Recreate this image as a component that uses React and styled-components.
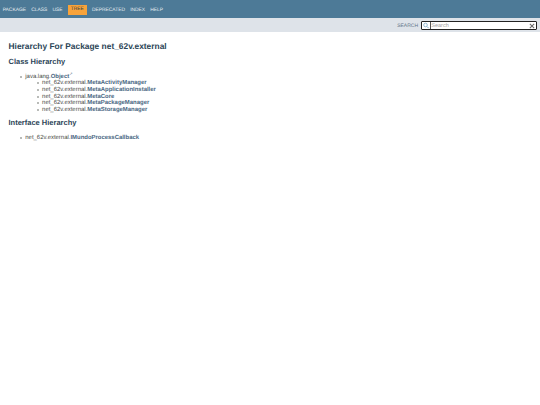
import React from 'react';
import styled, { createGlobalStyle } from 'styled-components';

const Global = createGlobalStyle`
  html, body { margin: 0; padding: 0; background: #fff; }
  body {
    font-family: "Liberation Sans", Arial, sans-serif;
    color: #474a45;
    text-rendering: geometricPrecision;
  }
`;

const Page = styled.div`
  width: 540px;
  height: 405px;
  overflow: hidden;
  background: #fff;
`;

const TopNav = styled.nav`
  height: 18px;
  box-sizing: border-box;
  padding: 1px 0 0 2.7px;
  background: #4d7a97;
  display: flex;
  align-items: center;
  gap: 5.2px;
`;

const NavItem = styled.span`
  font-size: 4.9px;
  line-height: 10px;
  padding-top: ${(p) => (p.$active ? '0.5px' : '1px')};
  height: 10px;
  box-sizing: border-box;
  color: ${(p) => (p.$active ? '#2f3a44' : '#e6edf2')};
  background: ${(p) => (p.$active ? '#f8a33a' : 'transparent')};
  padding-left: ${(p) => (p.$active ? '3px' : '0')};
  padding-right: ${(p) => (p.$active ? '3px' : '0')};
  text-transform: uppercase;
`;

const SubNav = styled.div`
  height: 14px;
  box-sizing: border-box;
  padding: 1px 3px 0 0;
  background: #dee3e9;
  display: flex;
  align-items: center;
  justify-content: flex-end;
  gap: 3px;
`;

const SearchLabel = styled.label`
  font-size: 5px;
  line-height: 8px;
  padding-top: 1px;
  color: #5f7488;
`;

const SearchBox = styled.div`
  width: 114px;
  height: 7px;
  background: #fff;
  border: 1px solid #222;
  border-radius: 1px;
  display: flex;
  align-items: center;
  font-size: 5.5px;
  color: #a0a0a0;
`;

const SearchIcon = styled.svg`
  width: 7.5px;
  height: 7px;
  flex: none;
`;

const Placeholder = styled.span`
  flex: 1;
  height: 7px;
  box-sizing: border-box;
  padding: 1px 0 0 0.8px;
  border-left: 0.5px solid #555;
  line-height: 7px;
`;

const ClearIcon = styled.svg`
  width: 6px;
  height: 6px;
  flex: none;
  margin-right: 1px;
`;

const Main = styled.main`
  padding: 9px 8px 0 8.5px;
`;

const Title = styled.h1`
  margin: 0 0 4.5px;
  font-size: 8.4px;
  line-height: 11px;
  font-weight: bold;
  color: #2c4557;
`;

const SectionTitle = styled.h2`
  margin: 0 0 7px;
  font-size: 7.5px;
  line-height: 10px;
  font-weight: bold;
  color: #2c4557;
`;

const Tree = styled.ul`
  margin: 0 0 4.5px;
  padding: 0 0 0 16.8px;
  list-style: none;
  font-size: 5.95px;
  line-height: 6.67px;
`;

const SubTree = styled.ul`
  margin: 0;
  padding: 0 0 0 16.8px;
  list-style: none;
`;

const Item = styled.li`
  position: relative;
  &::before {
    content: '';
    position: absolute;
    left: -5.5px;
    top: 2px;
    width: 2px;
    height: 2px;
    border-radius: 50%;
    background: #a2a4a0;
  }
`;

const ClassLink = styled.a`
  color: #4a6782;
  font-weight: bold;
`;

const External = styled.sup`
  font-size: 4px;
  line-height: 0;
  color: #4a6782;
`;

const navItems = ['Package', 'Class', 'Use', 'Tree', 'Deprecated', 'Index', 'Help'];
const classes = ['MetaActivityManager', 'MetaApplicationInstaller', 'MetaCore', 'MetaPackageManager', 'MetaStorageManager'];

export default function App() {
  return (
    <Page>
      <Global />
      <TopNav>
        {navItems.map((n) => (
          <NavItem key={n} $active={n === 'Tree'}>{n}</NavItem>
        ))}
      </TopNav>
      <SubNav>
        <SearchLabel>SEARCH</SearchLabel>
        <SearchBox>
          <SearchIcon viewBox="0 0 15 14">
            <circle cx="7" cy="6" r="3.6" fill="none" stroke="#7aa8c8" strokeWidth="1.6" />
            <path d="M10 9l3.5 3.5" stroke="#7aa8c8" strokeWidth="2" />
          </SearchIcon>
          <Placeholder>Search</Placeholder>
          <ClearIcon viewBox="0 0 14 14">
            <path d="M2 2l10 10M12 2L2 12" stroke="#666" strokeWidth="2.4" />
          </ClearIcon>
        </SearchBox>
      </SubNav>
      <Main>
        <Title>Hierarchy For Package net_62v.external</Title>
        <SectionTitle>Class Hierarchy</SectionTitle>
        <Tree>
          <Item>
            java.lang.<ClassLink>Object</ClassLink><External>↗</External>
            <SubTree>
              {classes.map((c) => (
                <Item key={c}>net_62v.external.<ClassLink>{c}</ClassLink></Item>
              ))}
            </SubTree>
          </Item>
        </Tree>
        <SectionTitle>Interface Hierarchy</SectionTitle>
        <Tree>
          <Item>net_62v.external.<ClassLink>IMundoProcessCallback</ClassLink></Item>
        </Tree>
      </Main>
    </Page>
  );
}
